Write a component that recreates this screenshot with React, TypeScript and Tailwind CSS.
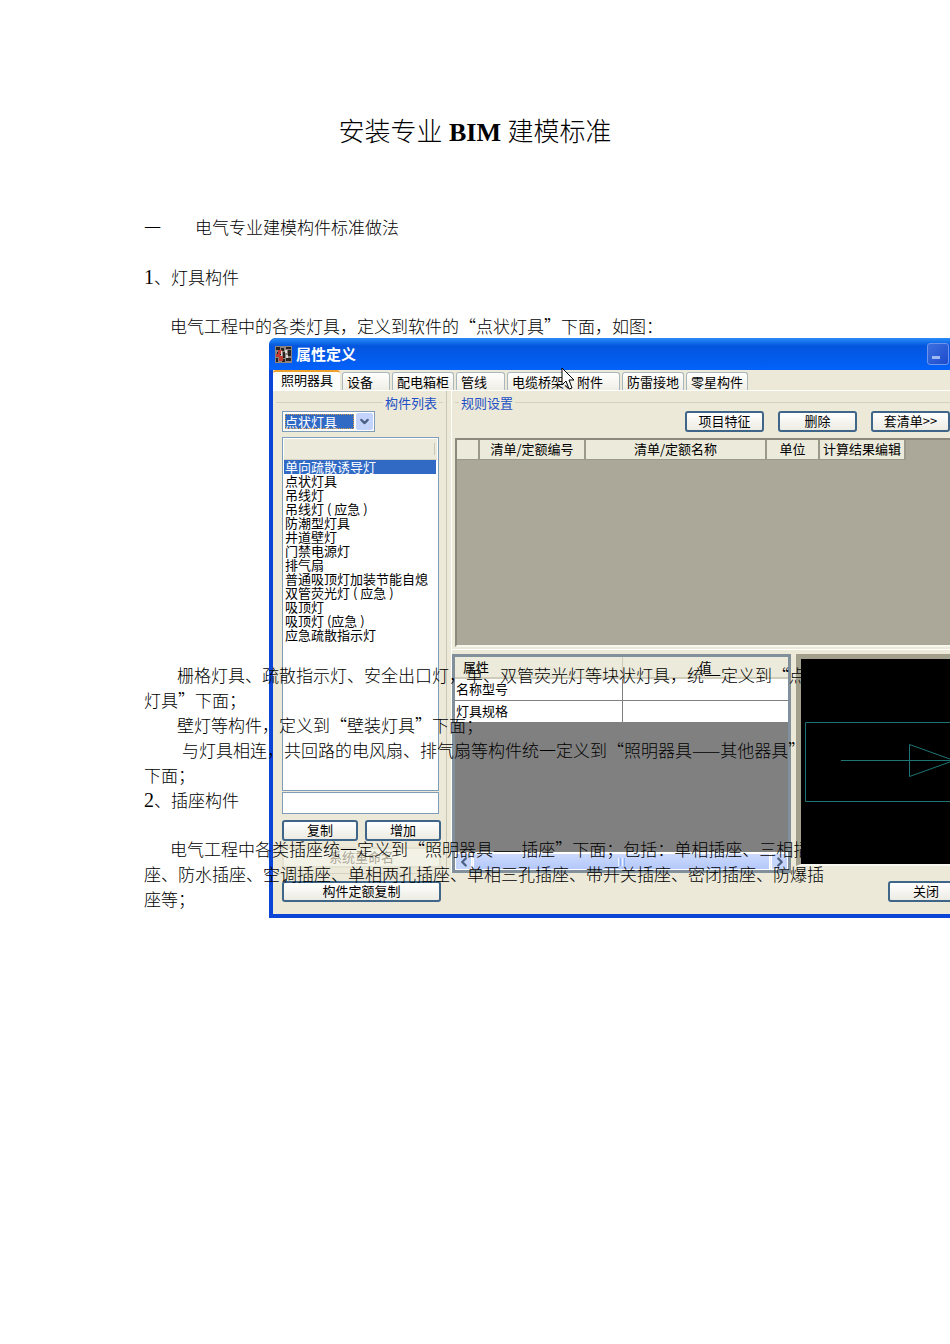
import { ChevronLeft, ChevronRight, ChevronDown } from 'lucide-react';
import clsx from 'clsx';

const tabs = [
  { label: '照明器具', width: 'w-[67px]' },
  { label: '设备', width: 'w-[48px]' },
  { label: '配电箱柜', width: 'w-[62px]' },
  { label: '管线', width: 'w-[49px]' },
  { label: '电缆桥架、附件', width: 'w-[113px]' },
  { label: '防雷接地', width: 'w-[62px]' },
  { label: '零星构件', width: 'w-[62px]' }
];

const components = [
  '单向疏散诱导灯',
  '点状灯具',
  '吊线灯',
  '吊线灯 ( 应急 )',
  '防潮型灯具',
  '井道壁灯',
  '门禁电源灯',
  '排气扇',
  '普通吸顶灯加装节能自熄',
  '双管荧光灯 ( 应急 )',
  '吸顶灯',
  '吸顶灯 (应急 )',
  '应急疏散指示灯'
];

const columns = [
  { label: '', width: 'w-[22px]' },
  { label: '清单/定额编号', width: 'w-[106px]' },
  { label: '清单/定额名称', width: 'w-[181px]' },
  { label: '单位', width: 'w-[53px]' },
  { label: '计算结果编辑', width: 'w-[86px]' }
];

interface XpButtonProps {
  children: string;
  className?: string;
  disabled?: boolean;
}

function XpButton({ children, className, disabled }: XpButtonProps) {
  return (
    <button
      type="button"
      disabled={disabled}
      className={clsx(
        'h-[21px] shrink-0 rounded-[3px] border-2 pb-[2px] text-[13px] leading-[15px] whitespace-nowrap',
        disabled
          ? 'border-[#e3e1d0] bg-[#f3f2e6] text-[#aca899]'
          : 'border-[#3f6588] bg-linear-to-b from-white to-[#ecebe3] text-black',
        className
      )}
    >
      {children}
    </button>
  );
}

function TitleBar() {
  return (
    <div className="h-8 flex items-center justify-between pl-[6px] pr-px bg-linear-to-b from-[#2a8cf8] via-[#0355dd] via-25% to-[#0262fb]">
      <div className="flex items-center gap-1">
        <svg width="17" height="17" viewBox="0 0 17 17">
          <rect width="17" height="17" fill="#8d8480" />
          <path d="M1 1h4v3H1zM6 2h3v3H6zM11 1h5v2h-5zM2 6h4v3H2zM8 6h2v6H8zM13 4h3v6h-3zM1 12h2v4H1zM7 13h3v3H7zM11 12h5v3h-5z" fill="#2a2220" />
          <path d="M3 4h4v4H3zM1 8h4v3H1zM4 10h4v5H4z" fill="#c23a32" />
          <path d="M10 4h2v3h-2zM11 9h2v3h-2zM6 5h1v5H6z" fill="#ded8d4" />
        </svg>
        <span className="text-[15px] leading-5 font-bold text-white">属性定义</span>
      </div>
      <button
        type="button"
        aria-label="最小化"
        className="w-[22px] h-[22px] rounded-[3px] border border-[#6d95ee] bg-linear-to-br from-[#3d6fe0] to-[#1c4bcb] flex items-end pl-1 pb-[5px]"
      >
        <span className="w-2 h-[3px] bg-[#9fb8f2]" />
      </button>
    </div>
  );
}

function TabStrip() {
  return (
    <div role="tablist" className="h-[21px] flex items-end gap-[2px] border-b border-white">
      {tabs.map((tab, index) => (
        <button
          key={tab.label}
          type="button"
          role="tab"
          aria-selected={index === 0}
          className={clsx(
            'shrink-0 rounded-t-[3px] text-[13px] whitespace-nowrap text-left',
            tab.width,
            index === 0
              ? 'h-5 pb-[2px] pl-2 border-t-2 border-[#f0a02c] bg-[#fcfcfa] leading-4'
              : 'h-[18px] pl-1 border border-b-0 border-[#a9b8bd] bg-linear-to-b from-white to-[#efeee5] leading-[18px]'
          )}
        >
          {tab.label}
        </button>
      ))}
    </div>
  );
}

function ComponentPanel() {
  return (
    <section className="w-[174px] h-[482px] shrink-0 flex flex-col px-[7px] border-r border-[#c9c7b6]">
      <div className="h-[19px] shrink-0 flex items-center gap-[2px] -mx-1 pt-1">
        <span className="flex-1 h-px bg-[#d3d1c0]" />
        <h2 className="text-[13px] leading-4 text-[#1c50c4]">构件列表</h2>
        <span className="w-1 h-px bg-[#d3d1c0]" />
      </div>
      <div className="relative shrink-0 mt-px w-[93px] h-[21px] ml-[2px] bg-white border border-[#7f9db9] p-[2px] flex">
        <select
          aria-label="构件类型"
          className="appearance-none w-[69px] h-[15px] bg-[#316ac5] text-white text-[13px] leading-[15px] outline-1 outline-dotted outline-[#d9a04a] -outline-offset-1"
        >
          <option>点状灯具</option>
        </select>
        <span className="absolute right-px top-px w-[17px] h-[17px] rounded-[2px] bg-[#c3d3fb] flex items-center justify-center pointer-events-none">
          <ChevronDown size={13} strokeWidth={4} color="#4d6185" />
        </span>
      </div>
      <div className="mt-[5px] h-[354px] shrink-0 ml-[2px] w-[157px] bg-white border border-[#7f9db9] p-px">
        <div className="h-[21px] bg-[#ebeadb] border-b border-[#d6d2c2] flex justify-end py-1 pr-[2px]">
          <span className="w-px bg-[#c9c6b2]" />
        </div>
        <ul role="listbox" aria-label="构件列表" className="text-[13px] leading-[14px] whitespace-nowrap">
          {components.map((name, index) => (
            <li
              key={name}
              role="option"
              aria-selected={index === 0}
              className={clsx('h-[14px] pl-px mr-px', index === 0 && 'bg-[#316ac5] text-white')}
            >
              {name}
            </li>
          ))}
        </ul>
      </div>
      <input
        aria-label="构件名称"
        className="ml-[2px] mt-px w-[157px] h-[22px] shrink-0 bg-white border border-[#7f9db9] px-1 text-[13px]"
      />
      <div className="mt-[6px] ml-[2px] flex justify-between w-[159px]">
        <XpButton className="w-[76px]">复制</XpButton>
        <XpButton className="w-[76px]">增加</XpButton>
      </div>
      <XpButton disabled className="mt-[6px] ml-[2px] w-[159px]">系统重命名</XpButton>
      <div className="h-[6px] shrink-0 -mx-1 border-b border-[#d3d1c0]" />
      <XpButton className="mt-[7px] ml-[2px] w-[159px]">构件定额复制</XpButton>
    </section>
  );
}

function RulesPanel() {
  return (
    <section className="h-[256px] pl-[3px] flex flex-col">
      <div className="h-[19px] flex items-center gap-[2px] pt-1">
        <span className="w-1 h-px bg-[#d3d1c0]" />
        <h2 className="text-[13px] leading-4 text-[#1c50c4]">规则设置</h2>
        <span className="flex-1 h-px bg-[#d3d1c0]" />
      </div>
      <div className="mt-px flex justify-end gap-[14px]">
        <XpButton className="w-[79px]">项目特征</XpButton>
        <XpButton className="w-[79px]">删除</XpButton>
        <XpButton className="w-[79px]">{'套清单>>'}</XpButton>
      </div>
      <div className="mt-[6px] flex-1 bg-[#aca899] border-2 border-r-0 border-[#8b897b] border-b-[#f8f7ef]">
        <table className="table-fixed w-[448px] border-collapse">
          <thead>
            <tr>
              {columns.map((column) => (
                <th
                  key={column.width}
                  className={clsx(
                    'h-[19px] p-0 bg-[#ebeadb] border-r-2 border-b border-[#9b998a] text-[13px] leading-[18px] font-normal whitespace-nowrap',
                    column.width
                  )}
                >
                  {column.label}
                </th>
              ))}
            </tr>
          </thead>
        </table>
      </div>
    </section>
  );
}

function PropertyGrid() {
  return (
    <div className="w-[339px] h-[219px] shrink-0 flex flex-col border-[3px] border-[#82909b] bg-[#808080]">
      <table className="w-full table-fixed border-collapse text-[13px] leading-4">
        <thead>
          <tr className="h-[21px] bg-[#ebeadb] border-b-2 border-[#cfccba]">
            <th className="p-0 pl-2 w-[167px] text-left font-normal border-r border-[#cfccba]">属性</th>
            <th className="p-0 font-normal">值</th>
          </tr>
        </thead>
        <tbody className="bg-white">
          <tr className="h-[22px] border-b border-[#808080]">
            <td className="p-0 pl-px border-r border-[#808080]">名称型号</td>
            <td className="p-0" />
          </tr>
          <tr className="h-[22px]">
            <td className="p-0 pl-px border-r border-[#808080]">灯具规格</td>
            <td className="p-0" />
          </tr>
        </tbody>
      </table>
      <div className="mt-auto h-[18px] flex bg-[#eef1fb] border-t border-white">
        <button type="button" aria-label="向左滚动" className="w-[17px] bg-[#c6d5fc] border border-white flex items-center justify-center">
          <ChevronLeft size={14} strokeWidth={4} color="#4d6185" className="shrink-0" />
        </button>
        <div className="flex-1 mx-px bg-linear-to-b from-[#cbd9fd] to-[#b4c8fa] border border-white flex items-center justify-center gap-px">
          <span className="w-px h-2 bg-[#eef4fe]" />
          <span className="w-px h-2 bg-[#8cb0f8]" />
          <span className="w-px h-2 bg-[#eef4fe]" />
          <span className="w-px h-2 bg-[#8cb0f8]" />
        </div>
        <button type="button" aria-label="向右滚动" className="w-[17px] bg-[#c6d5fc] border border-white flex items-center justify-center">
          <ChevronRight size={14} strokeWidth={4} color="#4d6185" className="shrink-0" />
        </button>
      </div>
    </div>
  );
}

function SymbolPreview() {
  return (
    <div className="flex-1 h-[212px] overflow-hidden bg-black border-l-[5px] border-t-[5px] border-b-2 border-[#a29f8c] border-b-[#f8f7ef]">
      <svg width="180" height="205" fill="none" stroke="#1d7474" strokeWidth="1">
        <path d="M180 63.5H4.500V142.500H180" />
        <path d="M40 101.500H170M108.500 85.500V117.500L153 101.500Z" />
      </svg>
    </div>
  );
}

function PropertyWindow() {
  return (
    <div className="absolute left-[269px] right-0 top-[338px] overflow-hidden rounded-tl-[7px] bg-[#0a45d8] font-['Noto_Sans_CJK_SC',sans-serif] text-black">
      <TitleBar />
      <div className="ml-1 mb-1 bg-[#ece9d8] flex flex-col">
        <TabStrip />
        <div className="h-[523px] flex">
          <ComponentPanel />
          <div className="flex-1 min-w-0 ml-1">
            <div className="border-l border-white">
              <RulesPanel />
              <div className="mt-[2px] pt-[4px] border-t border-white flex gap-[5px]">
                <PropertyGrid />
                <SymbolPreview />
              </div>
            </div>
            <div className="mt-[8px] flex justify-end">
              <XpButton className="w-[76px] -mr-[14px]">关闭</XpButton>
            </div>
          </div>
        </div>
      </div>
      <svg className="absolute left-[292px] top-[29px]" width="14" height="24" viewBox="0 0 14 24">
        <path d="M1 1v17l4-4 3 8 3-1-3-8h5z" fill="white" stroke="black" />
      </svg>
    </div>
  );
}

export default function App() {
  return (
    <main className="relative min-h-screen overflow-x-hidden bg-white text-black">
      <PropertyWindow />
      <article className="relative pointer-events-none px-36 pt-[110px] pb-96 font-['Noto_Sans_CJK_SC',sans-serif] font-light text-[17px] leading-[25px] whitespace-nowrap">
        <h1 className="text-center text-[26px] leading-10">
          安装专业
          <span className="font-['Liberation_Serif',serif] font-bold"> BIM </span>
          建模标准
        </h1>
        <h2 className="mt-[61px] flex gap-[34px]">
          <span>一</span>
          <span>电气专业建模构件标准做法</span>
        </h2>
        <h3 className="mt-[25px]">
          <span className="font-['Liberation_Serif','Noto_Sans_CJK_SC',serif] text-[20px] leading-none">1</span>、灯具构件
        </h3>
        <p className="mt-6 pl-[26px]">电气工程中的各类灯具，定义到软件的“点状灯具”下面，如图：</p>
        <p className="mt-[324px] pl-[33px]">栅格灯具、疏散指示灯、安全出口灯，单、双管荧光灯等块状灯具，统一定义到“点状</p>
        <p>灯具”下面；</p>
        <p className="pl-[33px]">壁灯等构件，定义到“壁装灯具”下面；</p>
        <p className="pl-[38px]">与灯具相连，共回路的电风扇、排气扇等构件统一定义到“照明器具——其他器具”</p>
        <p>下面；</p>
        <h3>
          <span className="font-['Liberation_Serif','Noto_Sans_CJK_SC',serif] text-[20px] leading-none">2</span>、插座构件
        </h3>
        <p className="mt-6 pl-[26px]">电气工程中各类插座统一定义到“照明器具——插座”下面；包括：单相插座、三相插</p>
        <p>座、防水插座、空调插座、单相两孔插座、单相三孔插座、带开关插座、密闭插座、防爆插</p>
        <p>座等；</p>
      </article>
    </main>
  );
}
